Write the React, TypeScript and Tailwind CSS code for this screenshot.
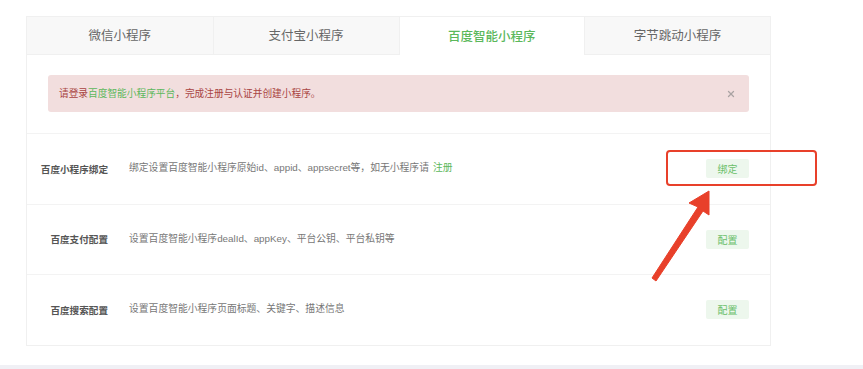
import { X } from "lucide-react";

const tabs = ["微信小程序", "支付宝小程序", "百度智能小程序", "字节跳动小程序"];
const active = 2;

const rows = [
  {
    label: "百度小程序绑定",
    desc: "绑定设置百度智能小程序原始id、appid、appsecret等，如无小程序请",
    link: "注册",
    action: "绑定",
  },
  { label: "百度支付配置", desc: "设置百度智能小程序dealId、appKey、平台公钥、平台私钥等", action: "配置" },
  { label: "百度搜索配置", desc: "设置百度智能小程序页面标题、关键字、描述信息", action: "配置" },
];

const font = { fontFamily: '"Noto Sans CJK SC", "Noto Sans", sans-serif' };
const mixed = { fontFamily: '"Liberation Sans", "Noto Sans CJK SC", sans-serif' };

export default function App() {
  return (
    <div className="relative w-[863px] h-[369px] bg-white overflow-hidden flex flex-col" style={font}>
      <div className="pt-4 pl-[26px]">
        <div className="w-[745px] border border-[#f0f0f0]">
          {/* tabs */}
          <div className="grid grid-cols-4 h-[38px]">
            {tabs.map((t, i) => (
              <div
                key={t}
                className={
                  "flex items-center justify-center text-[12.5px] " +
                  (i === active
                    ? "bg-white text-[#5cb85c] font-medium"
                    : "bg-[#f8f8f8] text-[#666] border-b border-[#f0f0f0]") +
                  (i > 0 ? " border-l border-[#f0f0f0]" : "")
                }
              >
                {t}
              </div>
            ))}
          </div>

          {/* alert */}
          <div className="px-[21px] pt-5 pb-[21px]">
            <div className="h-[37px] rounded-[3px] bg-[#f2dede] flex items-center pl-[11px] pr-[13px] text-[9.7px] text-[#a94442]">
              <span>
                请登录<span className="text-[#5cb85c]">百度智能小程序平台</span>，完成注册与认证并创建小程序。
              </span>
              <X size={10} strokeWidth={3} className="ml-auto text-[#aaa3a3]" />
            </div>
          </div>

          {/* rows */}
          {rows.map((r) => (
            <div key={r.label} className="h-[70.5px] border-t border-[#f3f3f3] flex items-center pr-[21px]">
              <div className="w-[81px] text-right text-[9.6px] font-bold text-[#555]">{r.label}</div>
              <div className="ml-[21px] text-[9.8px] text-[#777]" style={mixed}>
                {r.desc}
                {r.link && <span className="ml-1 text-[#5cb85c]">{r.link}</span>}
              </div>
              <button className="ml-auto w-[43px] h-[19px] rounded-[2px] bg-[#edf7ed] text-[10px] text-[#6abf6a] flex items-center justify-center">
                {r.action}
              </button>
            </div>
          ))}
        </div>
      </div>

      <div className="mt-auto h-[4px] bg-[#f0f0f5]" />

      {/* annotation overlay */}
      <div className="absolute left-[666px] top-[150px] w-[151px] h-[36px] border-2 border-[#e8402a] rounded-[4px]" />
      <svg className="absolute left-0 top-0" width="863" height="369" viewBox="0 0 863 369">
        <polygon
          points="709,191 689,203 698,207 652,278 656,281 703,211 709,215"
          fill="#e8402a"
          stroke="#e8402a"
          strokeWidth="1"
          strokeLinejoin="round"
        />
      </svg>
    </div>
  );
}
